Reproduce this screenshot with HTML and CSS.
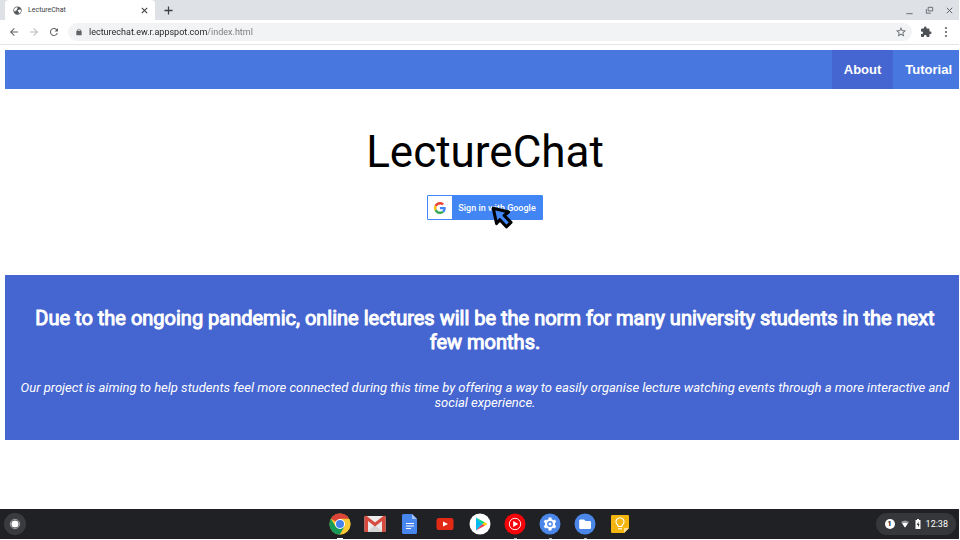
FILE: index.html
```
<!DOCTYPE html>
<html lang="en">
<head>
<meta charset="utf-8">
<meta name="viewport" content="width=device-width, initial-scale=1">
<title>LectureChat</title>
<link rel="stylesheet" href="styles.css">
</head>
<body>
<div class="desktop">
  <header class="browser">
    <div class="tab-strip">
      <div class="tab">
        <svg class="tab-icon" viewBox="0 0 24 24" aria-hidden="true"><circle cx="12" cy="12" r="11" fill="#53575c"/><path d="M3 8l4-4 5-1 1 3-3 2 1 3-4 1-1 3-3-2zM13 11l4-2 4 1v5l-3 4-3 1 1-4-3-2z" fill="#fff"/></svg>
        <span class="tab-title">LectureChat</span>
        <button class="icon-button" type="button" aria-label="Close tab"><svg class="icon-small" viewBox="0 0 10 10"><path d="M2 2l6 6M8 2L2 8" stroke="#3c4043" stroke-width="1.2"/></svg></button>
      </div>
      <button class="icon-button new-tab" type="button" aria-label="New tab"><svg class="icon-small" viewBox="0 0 10 10"><path d="M5 .5v9M.5 5h9" stroke="#3c4043" stroke-width="1.400"/></svg></button>
      <div class="window-controls">
        <button class="icon-button" type="button" aria-label="Minimise"><svg class="icon-small" viewBox="0 0 10 10"><path d="M1.500 8.500h7" stroke="#5f6368" stroke-width="1"/></svg></button>
        <button class="icon-button" type="button" aria-label="Restore"><svg class="icon-small" viewBox="0 0 10 10"><path d="M3.500 1.500h5v4h-5zM1.500 3.500v4.500h5" fill="none" stroke="#5f6368" stroke-width="1"/></svg></button>
        <button class="icon-button" type="button" aria-label="Close window"><svg class="icon-small" viewBox="0 0 10 10"><path d="M2 2l6 6M8 2L2 8" stroke="#5f6368" stroke-width="1.1"/></svg></button>
      </div>
    </div>
    <div class="toolbar">
      <button class="icon-button" type="button" aria-label="Back"><svg class="icon" viewBox="0 0 24 24"><path fill="#5f6368" d="M20 11H7.830l5.590-5.590L12 4l-8 8 8 8 1.410-1.410L7.830 13H20z"/></svg></button>
      <button class="icon-button" type="button" aria-label="Forward" disabled><svg class="icon" viewBox="0 0 24 24"><path fill="#babcbe" d="M4 13h12.170l-5.590 5.590L12 20l8-8-8-8-1.410 1.410L16.170 11H4z"/></svg></button>
      <button class="icon-button" type="button" aria-label="Reload"><svg class="icon" viewBox="0 0 24 24"><path fill="#5f6368" d="M17.650 6.350A8 8 0 1 0 19.730 14h-2.080A6 6 0 1 1 12 6c1.660 0 3.140.69 4.220 1.780L13 11h7V4z"/></svg></button>
      <div class="address">
        <svg class="lock" viewBox="0 0 24 24" aria-hidden="true"><path fill="#5f6368" fill-rule="evenodd" d="M18 8h-1V7A5 5 0 0 0 7 7v1H6a2 2 0 0 0-2 2v10c0 1.100.9 2 2 2h12a2 2 0 0 0 2-2V10a2 2 0 0 0-2-2zM9 8V7a3 3 0 0 1 6 0v1z"/></svg>
        <input class="url" type="text" aria-label="Address" value="lecturechat.ew.r.appspot.com/index.html" spellcheck="false">
        <button class="icon-button" type="button" aria-label="Bookmark"><svg class="icon" viewBox="0 0 24 24"><path fill="#5f6368" d="M22 9.240l-7.190-.62L12 2 9.190 8.630 2 9.240l5.460 4.730L5.820 21 12 17.270 18.180 21l-1.630-7.030zM12 15.400l-3.760 2.270 1-4.280-3.320-2.880 4.380-.38L12 6.100l1.710 4.040 4.380.38-3.320 2.880 1 4.280z"/></svg></button>
      </div>
      <button class="icon-button" type="button" aria-label="Extensions"><svg class="icon" viewBox="0 0 24 24"><path fill="#4d5156" d="M20.500 11H19V7a2 2 0 0 0-2-2h-4V3.500a2.500 2.500 0 0 0-5 0V5H4a2 2 0 0 0-2 2v3.800h1.500a2.700 2.700 0 0 1 0 5.400H2V20c0 1.100.9 2 2 2h3.800v-1.500a2.700 2.700 0 0 1 5.400 0V22H17a2 2 0 0 0 2-2v-4h1.500a2.500 2.500 0 0 0 0-5z"/></svg></button>
      <button class="icon-button" type="button" aria-label="Menu"><svg class="icon" viewBox="0 0 24 24"><g fill="#5f6368"><circle cx="12" cy="4" r="2.200"/><circle cx="12" cy="12" r="2.200"/><circle cx="12" cy="20" r="2.200"/></g></svg></button>
    </div>
  </header>

  <main class="page">
    <nav class="site-nav">
      <a class="nav-link active" href="#about">About</a>
      <a class="nav-link" href="#tutorial">Tutorial</a>
    </nav>
    <section class="hero">
      <h1 class="title">LectureChat</h1>
      <div class="sign-in-wrap">
        <button class="sign-in" type="button">
          <span class="google-box"><svg class="google" viewBox="0 0 48 48" aria-hidden="true"><path fill="#EA4335" d="M24 9.500c3.540 0 6.710 1.220 9.210 3.600l6.850-6.850C35.900 2.380 30.470 0 24 0 14.620 0 6.510 5.380 2.560 13.220l7.980 6.190C12.430 13.720 17.740 9.500 24 9.500z"/><path fill="#4285F4" d="M46.980 24.550c0-1.570-.15-3.090-.38-4.550H24v9.020h12.940c-.58 2.960-2.260 5.480-4.780 7.180l7.730 6c4.510-4.180 7.090-10.360 7.090-17.650z"/><path fill="#FBBC05" d="M10.530 28.590A14.500 14.500 0 0 1 9.770 24c0-1.600.27-3.140.76-4.590l-7.980-6.190A24 24 0 0 0 0 24c0 3.880.92 7.540 2.560 10.780z"/><path fill="#34A853" d="M24 48c6.480 0 11.930-2.130 15.890-5.810l-7.730-6c-2.150 1.450-4.920 2.300-8.160 2.300-6.260 0-11.570-4.220-13.470-9.910l-7.980 6.190C6.510 42.620 14.620 48 24 48z"/></svg></span>
          <span class="sign-in-text">Sign in with Google</span>
        </button>
        <svg class="pointer" viewBox="0 0 20 21" aria-hidden="true"><path d="M2 2l14 3.500-4 3.200 6.200 6.300-4.200 4-6-6.500-3 3.500z" fill="#4285f4" stroke="#000" stroke-width="2.800" stroke-linejoin="round"/></svg>
      </div>
    </section>
    <section class="about" id="about">
      <h2 class="headline">Due to the ongoing pandemic, online lectures will be the norm for many university students in the next few months.</h2>
      <p class="summary">Our project is aiming to help students feel more connected during this time by offering a way to easily organise lecture watching events through a more interactive and social experience.</p>
    </section>
  </main>

  <footer class="shelf">
    <button class="launcher" type="button" aria-label="Launcher"><svg class="launcher-icon" viewBox="0 0 12 12"><circle cx="6" cy="6" r="4.700" fill="none" stroke="#a0a2a4" stroke-width="1"/><circle cx="6" cy="6" r="3.600" fill="#fff"/></svg></button>
    <div class="apps">
      <button class="app wide-mark" type="button" aria-label="Chrome"><svg viewBox="0 0 22 22"><circle cx="11" cy="11" r="10.500" fill="#fbc934"/><path d="M11 11L1.900 5.750A10.500 10.500 0 0 1 20.100 5.750H11z" fill="#dc4437"/><path d="M1.900 5.750A10.500 10.500 0 0 0 11 21.500l4.700-8L6.500 13.500z" fill="#169b59"/><path d="M11 6h9.200A10.500 10.500 0 0 1 11 21.500l4.700-8z" fill="#fbc934"/><circle cx="11" cy="11" r="5" fill="#fff"/><circle cx="11" cy="11" r="4" fill="#4683ed"/></svg></button>
      <button class="app" type="button" aria-label="Gmail"><svg viewBox="0 0 22 22"><rect x=".5" y="3" width="21" height="16" rx="1" fill="#eceaea"/><path d="M3 19l8-7 8 7z" fill="#d7d3d3"/><path d="M.5 4v14a1 1 0 0 0 1 1H4V8l7 5.500L18 8v11h2.500a1 1 0 0 0 1-1V4c0-1-1.500-1.500-2.500-.8L11 9.500 3 3.200C2 2.500.5 3 .5 4z" fill="#d74b3f"/></svg></button>
      <button class="app" type="button" aria-label="Docs"><svg viewBox="0 0 22 22"><path d="M4.500 1H13l5 5v13.500a1.500 1.500 0 0 1-1.500 1.500h-12A1.500 1.500 0 0 1 3 19.500v-17A1.500 1.500 0 0 1 4.500 1z" fill="#4786ee"/><path d="M13 1l5 5h-5z" fill="#a4c3f8"/><path d="M7 10.500h8M7 13h8M7 15.500h5" stroke="#fff" stroke-width="1.100"/></svg></button>
      <button class="app" type="button" aria-label="YouTube"><svg viewBox="0 0 22 22"><rect x="2.500" y="5" width="17" height="12" rx="2.500" fill="#e32a17"/><path d="M9 8.500l5 2.500-5 2.500z" fill="#fff"/></svg></button>
      <button class="app" type="button" aria-label="Play Store"><svg viewBox="0 0 22 22"><circle cx="11" cy="11" r="10.500" fill="#fff"/><path d="M7 4.500v13l6.500-6.500z" fill="#00b8ef"/><path d="M7 4.500l9 5-2.500 1.500z" fill="#00d977"/><path d="M7 17.500l9-5-2.500-1.500z" fill="#ee394d"/><path d="M13.500 11l2.300-1.700 2.700 1.700-2.700 1.700z" fill="#ffc900"/></svg></button>
      <button class="app mark" type="button" aria-label="YouTube Music"><svg viewBox="0 0 22 22"><circle cx="11" cy="11" r="10.500" fill="#f40509"/><circle cx="11" cy="11" r="5.700" fill="none" stroke="#fff" stroke-width=".9"/><path d="M9.200 8l5 3-5 3z" fill="#fff"/></svg></button>
      <button class="app mark" type="button" aria-label="Settings"><svg viewBox="0 0 22 22"><circle cx="11" cy="11" r="10.500" fill="#4b87e8"/><g stroke="#fff"><circle cx="11" cy="11" r="4" fill="none" stroke-width="2.200"/><path d="M11 4.500v2.500M11 15v2.500M5.370 7.750l2.200 1.250M14.430 13l2.200 1.250M5.370 14.250L7.570 13M14.430 9l2.200-1.250" stroke-width="3"/></g><circle cx="11" cy="11" r="1.500" fill="#fff"/></svg></button>
      <button class="app mark" type="button" aria-label="Files"><svg viewBox="0 0 22 22"><circle cx="11" cy="11" r="10.500" fill="#4b87e8"/><path d="M6.500 6.500H10l1.500 1.500h4.200c.7 0 1.300.6 1.300 1.300v5.400c0 .7-.6 1.300-1.300 1.300H6.500c-.7 0-1.300-.6-1.300-1.300V7.800c0-.7.600-1.300 1.300-1.300z" fill="#fff"/></svg></button>
      <button class="app" type="button" aria-label="Keep"><svg viewBox="0 0 22 22"><path d="M3 2h16a1 1 0 0 1 1 1v12l-5 5H3a1 1 0 0 1-1-1V3a1 1 0 0 1 1-1z" fill="#f3b610"/><path d="M15 20v-4a1 1 0 0 1 1-1h4z" fill="#ffe19a"/><path d="M9 13.500v-1.300a4 4 0 1 1 4 0v1.300zM9 15.700h4" fill="none" stroke="#fff" stroke-width="1.100"/></svg></button>
    </div>
    <button class="status" type="button" aria-label="System status">
      <span class="count">1</span>
      <svg class="wifi" viewBox="0 0 10 10" aria-hidden="true"><path d="M1 3q4-3 8 0L5 8.500z" fill="#96999c"/><path d="M2.200 4.600q2.800-1.600 5.600 0L5 8.500z" fill="#fff"/></svg>
      <svg class="battery" viewBox="0 0 6 10" aria-hidden="true"><path d="M2 0h2v1h1.500v9H.5V1H2z" fill="#fff"/><path d="M3.500 2.500L1.800 6H3v2.500L4.500 5H3.500z" fill="#303134"/></svg>
      <span>12:38</span>
    </button>
  </footer>
</div>
</body>
</html>
```

FILE: styles.css
```
* { box-sizing: border-box; }

body {
  margin: 0;
  background: #fff;
  color: #000;
  font-family: Roboto, sans-serif;
}

button {
  margin: 0;
  padding: 0;
  border: 0;
  background: none;
  font-family: inherit;
}

svg { display: block; }

.desktop {
  display: flex;
  flex-direction: column;
  min-height: 100vh;
  padding: 0 1px 1px 0;
}

/* Browser frame */
.browser { border-bottom: 1px solid #e4e5e7; }

.tab-strip {
  display: flex;
  align-items: center;
  height: 20px;
  padding-left: 5px;
  background: #dee1e6;
}

.tab {
  display: flex;
  align-items: center;
  align-self: stretch;
  width: 150px;
  gap: 6px;
  padding: 0 6px 0 8px;
  border-radius: 4px 4px 0 0;
  background: #fff;
}

.tab-icon { width: 9px; height: 9px; }

.tab-title {
  flex: 1;
  color: #3c4043;
  font-size: 7px;
}

.icon-button {
  display: flex;
  align-items: center;
  justify-content: center;
}

.icon-small { width: 9px; height: 9px; }
.new-tab { margin-left: 9px; }

.window-controls {
  display: flex;
  gap: 11px;
  margin-left: auto;
  padding-right: 5px;
}

.toolbar {
  display: flex;
  align-items: center;
  gap: 8px;
  height: 24px;
  padding: 0 7px 0 8px;
}

.icon { width: 12px; height: 12px; }

.address {
  display: flex;
  flex: 1;
  align-items: center;
  gap: 6px;
  height: 18px;
  padding: 0 5px 0 7px;
  border-radius: 9px;
  background: #f1f3f4;
}

.lock { width: 8px; height: 8px; }

.url {
  flex: 1;
  min-width: 0;
  padding: 0;
  border: 0;
  outline: 0;
  background: linear-gradient(90deg, #202124 118px, #74787c 118px);
  background-clip: text;
  color: transparent;
  font: 9px Roboto, sans-serif;
}

/* Page */
.page {
  flex: 1;
  padding: 5px 0 0 5px;
}

.site-nav {
  display: flex;
  justify-content: flex-end;
  background: #4877e0;
}

.nav-link {
  padding: 11px 12px;
  color: #fff;
  font: bold 13px/17px "Liberation Sans", Arial, sans-serif;
  text-decoration: none;
}

.nav-link.active { background: #4565d0; }
.nav-link:last-child { padding-right: 7px; }

.hero {
  padding: 37px 0 55px 6px;
  text-align: center;
}

.title {
  margin: 0;
  font-size: 44px;
  font-weight: 400;
  line-height: 52px;
}

.sign-in-wrap {
  position: relative;
  width: max-content;
  margin: 17px auto 0;
}

.sign-in {
  display: flex;
  align-items: center;
  height: 25px;
  border: 1px solid #4285f4;
  border-radius: 1px;
  background: #4285f4;
  color: #fff;
  font-size: 9px;
  font-weight: 500;
}

.google-box {
  display: flex;
  align-items: center;
  justify-content: center;
  width: 24px;
  height: 23px;
  background: #fff;
}

.google { width: 12px; height: 12px; }
.sign-in-text { padding: 0 6px; }

.pointer {
  position: absolute;
  top: 11px;
  left: 64px;
  width: 22px;
  height: 23px;
}

.about {
  padding: 31px 7px 30px 13px;
  background: #4565d0;
  color: #fff;
  text-align: center;
}

/* Regular face with a thin stroke gives a lighter bold */
.headline {
  margin: 0;
  font-size: 20px;
  font-weight: 400;
  line-height: 24px;
  -webkit-text-stroke: 1px #fff;
}

.summary {
  margin: 26px 0 0;
  font-size: 13px;
  font-style: italic;
  line-height: 15px;
}

/* Shelf */
.shelf {
  display: grid;
  grid-template-columns: 1fr auto 1fr;
  align-items: center;
  height: 30px;
  padding: 0 3px 0 4px;
  background: #202124;
}

.launcher {
  display: flex;
  align-items: center;
  justify-content: center;
  width: 22px;
  height: 22px;
  border-radius: 50%;
  background: #3a3b3e;
}

.launcher-icon { width: 12px; height: 12px; }

.apps {
  display: flex;
  gap: 13px;
}

.app {
  position: relative;
  width: 22px;
  height: 22px;
}

.mark::after,
.wide-mark::after {
  content: "";
  position: absolute;
  bottom: -4px;
  left: 10px;
  width: 3px;
  height: 1px;
  background: #a9abad;
}

.wide-mark::after {
  left: 8px;
  width: 6px;
  background: #fff;
}

.status {
  display: flex;
  align-items: center;
  justify-self: end;
  gap: 5px;
  height: 22px;
  padding: 0 8px 0 9px;
  border-radius: 11px;
  background: #36373a;
  color: #fff;
  font-size: 9px;
}

.count {
  width: 10px;
  height: 10px;
  border-radius: 50%;
  background: #fff;
  color: #202124;
  font-size: 8px;
  font-weight: 700;
  line-height: 10px;
}

.wifi { width: 10px; height: 10px; }
.battery { width: 6px; height: 10px; }
```
